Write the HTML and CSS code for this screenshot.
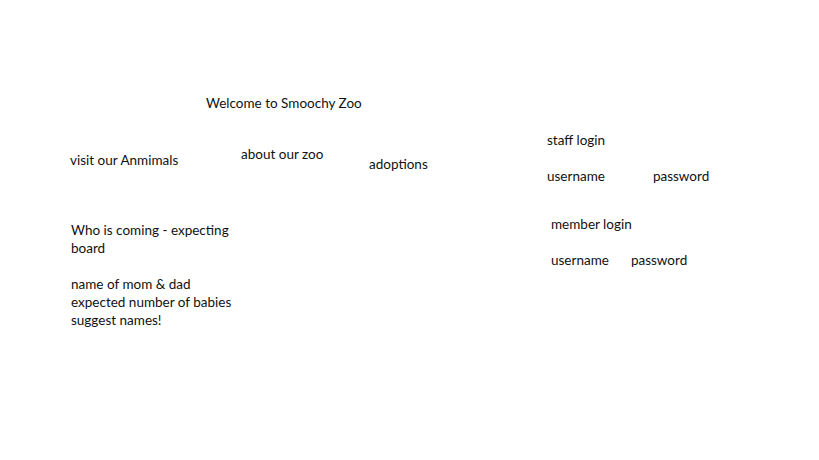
FILE: index.html
```html
<html>

<head>
    <meta charset="UTF-8">
    <meta name="viewport" content="width=device-width, initial-scale=1.0">
    <title>Smoochy Zoo</title>

    <link rel="stylesheet" href="styles.css">
</head>

<body>
    <div class="page">
        <div class="note welcome">Welcome to Smoochy Zoo</div>

        <div class="note visit">visit our Anmimals</div>
        <div class="note about">about our zoo</div>
        <div class="note adopt">adoptions</div>

        <div class="note staff">
            <p>staff login</p>
            <div class="fields wide">
                <span>username</span>
                <span>password</span>
            </div>
        </div>

        <div class="note member">
            <p>member login</p>
            <div class="fields">
                <span>username</span>
                <span>password</span>
            </div>
        </div>

        <div class="note board">
            <p>Who is coming - expecting board</p>
            <br>
            <p>name of mom &amp; dad</p>
            <p>expected number of babies</p>
            <p>suggest names!</p>
        </div>
    </div>
</body>

</html>
```

FILE: styles.css
```css
* {
    box-sizing: border-box;
}

body {
    margin: 0;
    background-color: #ffffff;
    color: #111111;
    font-family: Lato, "Open Sans", sans-serif;
    font-size: 13.5px;
    line-height: 18px;
}

p {
    margin: 0;
}

.page {
    position: relative;
    width: 819px;
    height: 460px;
}

.note {
    position: absolute;
    white-space: nowrap;
}

.welcome {
    left: 206px;
    top: 94px;
}

.visit {
    left: 70px;
    top: 151px;
}

.about {
    left: 241px;
    top: 145px;
}

.adopt {
    left: 369px;
    top: 155px;
}

.staff {
    left: 547px;
    top: 131px;
}

.member {
    left: 551px;
    top: 215px;
}

.fields {
    display: flex;
    gap: 22px;
    margin-top: 18px;
}

.fields.wide {
    gap: 48px;
}

.board {
    left: 71px;
    top: 221px;
    width: 170px;
    white-space: normal;
}
```
